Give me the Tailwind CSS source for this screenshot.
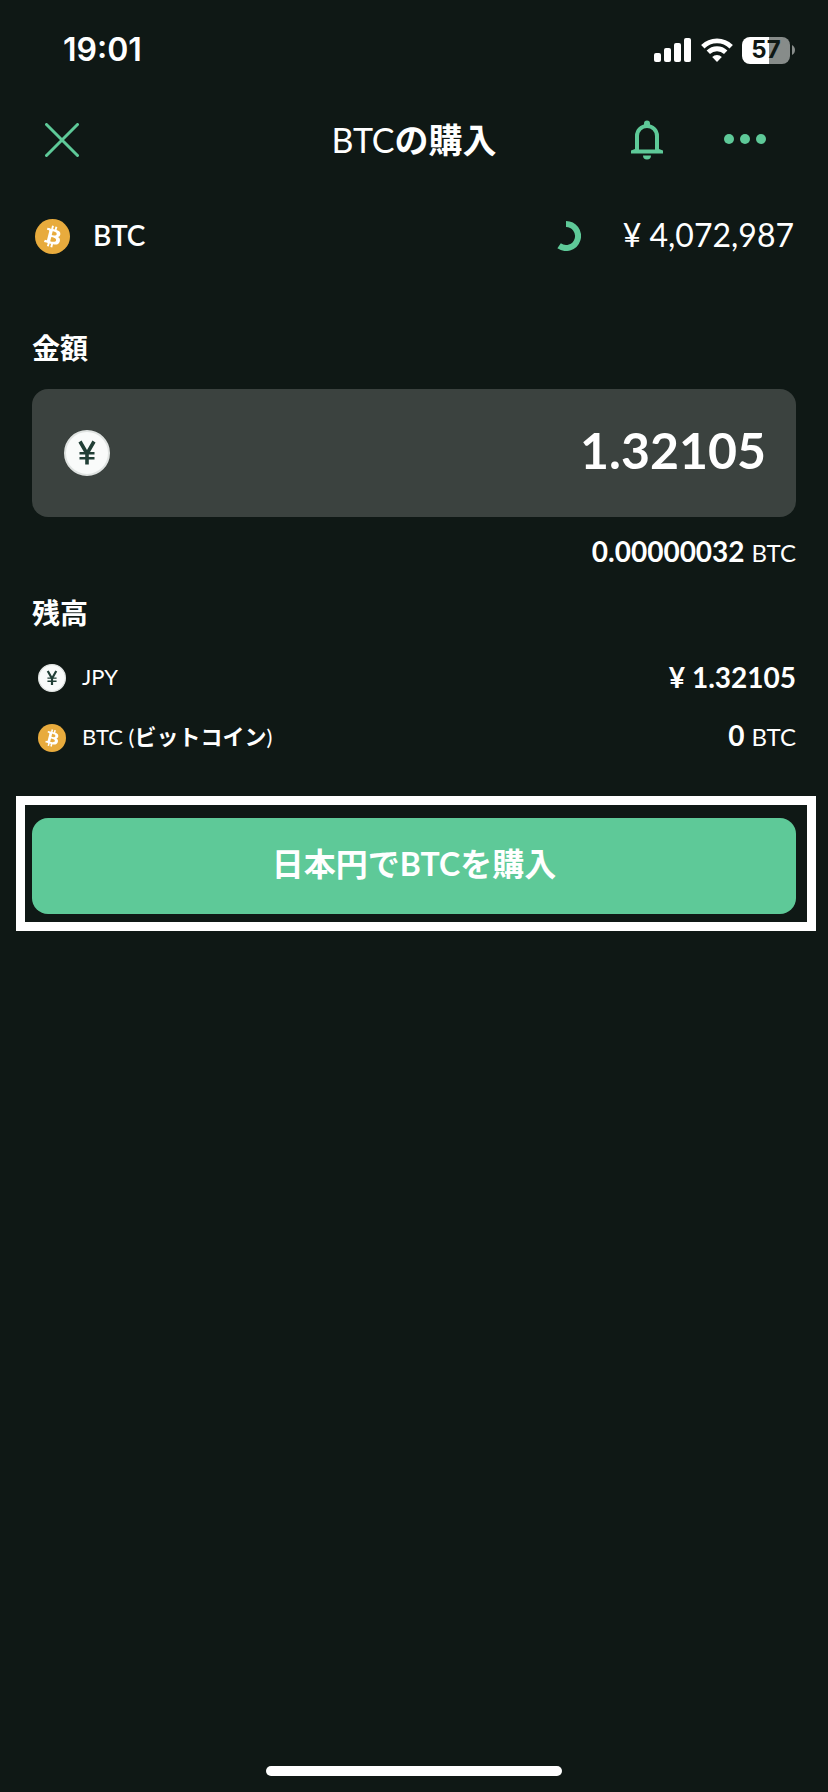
<!DOCTYPE html>
<html lang="ja">
<head>
<meta charset="utf-8">
<meta name="viewport" content="width=device-width, initial-scale=1">
<title>BTCの購入</title>
<script src="https://cdn.jsdelivr.net/npm/@tailwindcss/browser@4"></script>
</head>
<body class="flex min-h-screen flex-col bg-[#0f1815] font-['Lato','Noto_Sans_CJK_JP',sans-serif] text-white">

<svg class="hidden" aria-hidden="true">
  <symbol id="btc" viewBox="0 0 32 32">
    <circle cx="16" cy="16" r="16" fill="#e8ab3d"/>
    <path fill="#fff" d="M23.189 14.02c.314-2.096-1.283-3.223-3.465-3.975l.708-2.84-1.728-.43-.69 2.765c-.454-.114-.92-.22-1.385-.326l.695-2.783L15.596 6l-.708 2.839c-.376-.086-.746-.17-1.104-.26l.002-.009-2.384-.595-.46 1.846s1.283.294 1.256.312c.7.175.826.638.805 1.006l-.806 3.235c.048.012.11.03.18.057l-.183-.045-1.13 4.532c-.086.212-.303.531-.793.41.018.025-1.256-.313-1.256-.313l-.858 1.978 2.25.561c.418.105.828.215 1.231.318l-.715 2.872 1.727.43.708-2.84c.472.127.93.245 1.378.357l-.706 2.828 1.728.43.715-2.866c2.948.558 5.164.333 6.097-2.333.752-2.146-.037-3.385-1.588-4.192 1.13-.26 1.98-1.003 2.207-2.538zm-3.95 5.538c-.533 2.147-4.148.986-5.32.695l.95-3.805c1.172.293 4.929.872 4.37 3.11zm.535-5.569c-.487 1.953-3.495.96-4.47.717l.86-3.45c.975.243 4.118.696 3.61 2.733z"/>
  </symbol>
  <symbol id="yen" viewBox="0 0 46 46">
    <circle cx="23" cy="23" r="22" fill="#f9fbfa" stroke="#dfe3e1" stroke-width="2"/>
    <path fill="none" stroke="#213f36" stroke-width="3.6" d="M16 11.5l7 12.2 7-12.2M23 23v11.5"/>
    <path fill="none" stroke="#213f36" stroke-width="2.4" d="M15.500 23.200h15M15.500 28.200h15"/>
  </symbol>
</svg>

<div class="flex h-[100px] items-center justify-between pr-[33px] pl-[63px]">
  <time class="font-['Inter',sans-serif] text-[32px] leading-none font-semibold">19:01</time>
  <div class="flex items-center gap-[9px]">
    <svg class="h-6 w-[38px]" viewBox="0 0 38 24" fill="#fff" aria-label="電波強度">
      <rect x="0" y="15" width="7" height="9" rx="2"/><rect x="10" y="10" width="7" height="14" rx="2"/><rect x="20" y="5" width="7" height="19" rx="2"/><rect x="30" y="0" width="7" height="24" rx="2"/>
    </svg>
    <svg class="h-6 w-8" viewBox="0 0 32 24" aria-label="Wi-Fi">
      <path fill="none" stroke="#fff" stroke-width="4.800" d="M1.800 8.700a20.200 20.200 0 0 1 28.400 0M7.300 14.300a12.400 12.400 0 0 1 17.400 0"/>
      <path fill="#fff" d="M16 24l-4.800-5a6.800 6.800 0 0 1 9.600 0z"/>
    </svg>
    <div class="flex items-center gap-[2px]">
      <div class="flex h-[27px] w-12 items-center justify-center rounded-lg bg-linear-to-r from-white from-[56%] to-[#878c8a] to-[56%] font-['Inter',sans-serif] text-2xl leading-none font-bold text-[#0f1815]">57</div>
      <svg class="h-[10px] w-[3px]" viewBox="0 0 3 10" aria-hidden="true"><path fill="#878c8a" d="M0 0c4 2 4 8 0 10z"/></svg>
    </div>
  </div>
</div>

<header class="grid h-20 grid-cols-[1fr_auto_1fr] items-center px-[45px]">
  <button type="button" aria-label="閉じる" class="justify-self-start">
    <svg class="size-[34px]" viewBox="0 0 34 34" fill="none" stroke="#5ec998" stroke-width="3" stroke-linecap="round"><path d="M1.500 1.500l31 31M32.500 1.500l-31 31"/></svg>
  </button>
  <h1 class="text-[34px] leading-none whitespace-nowrap">BTC<span class="font-bold">の購入</span></h1>
  <div class="flex items-center gap-[61px] justify-self-end pr-4">
    <button type="button" aria-label="通知">
      <svg class="h-10 w-8" viewBox="0 0 32 40">
        <path fill="#5ec998" d="M13 5V3.500a3 3 0 0 1 6 0V5z"/>
        <path fill="none" stroke="#5ec998" stroke-width="4" d="M6 31V16a10 10 0 0 1 20 0v15"/>
        <path fill="#5ec998" d="M4 26v3L0 30.500V33.500h32V30.500L28 29v-3h-4v3.500H8V26zM12 35.500h8a4 4 0 0 1-8 0z"/>
      </svg>
    </button>
    <button type="button" aria-label="メニュー">
      <svg class="h-3 w-[43px]" viewBox="0 0 43 12" fill="#5ec998"><circle cx="5" cy="5" r="5"/><circle cx="21" cy="5" r="5"/><circle cx="37" cy="5" r="5"/></svg>
    </button>
  </div>
</header>

<main class="flex flex-col">
  <section class="flex h-28 items-center justify-between pr-[34px] pl-[35px]">
    <div class="flex items-center gap-[23px]">
      <svg class="size-[35px]" aria-hidden="true"><use href="#btc"/></svg>
      <span class="pb-[2px] text-[28px] leading-none font-semibold">BTC</span>
    </div>
    <div class="flex items-center gap-[42px]">
      <svg class="size-[30px]" viewBox="0 0 30 30" role="img" aria-label="更新中"><path fill="none" stroke="#5ec998" stroke-width="6" d="M15 3a12 12 0 1 1-6.900 21.800"/></svg>
      <span class="pb-[2px] text-[32px] leading-none">¥ 4,072,987</span>
    </div>
  </section>

  <section class="px-8 pt-9">
    <label for="amount" class="block text-[28px] leading-10 font-bold">金額</label>
    <div class="mt-[21px] flex h-32 items-center rounded-2xl bg-[#3b423f] pr-[30px] pl-8">
      <svg class="size-[46px] shrink-0" aria-hidden="true"><use href="#yen"/></svg>
      <input id="amount" type="text" inputmode="decimal" value="1.32105" class="min-w-0 flex-1 bg-transparent pb-[6px] text-right text-[50px] leading-none font-bold outline-none">
    </div>
    <p class="mt-[14px] text-right text-[28px] leading-10 font-bold">0.00000032 <span class="text-2xl font-normal">BTC</span></p>
  </section>

  <section class="px-8 pt-[22px]">
    <h2 class="text-[28px] leading-10 font-bold">残高</h2>
    <ul class="mt-[15px]">
      <li class="flex h-[60px] items-center justify-between pl-[6px]">
        <span class="flex items-center gap-4 text-[22px] leading-none"><svg class="size-7" aria-hidden="true"><use href="#yen"/></svg><span class="pb-[2px]">JPY</span></span>
        <span class="pb-[2px] text-[28px] leading-none font-bold">¥ 1.32105</span>
      </li>
      <li class="flex h-[60px] items-center justify-between pl-[6px]">
        <span class="flex items-center gap-4 text-[22px] leading-none"><svg class="size-7" aria-hidden="true"><use href="#btc"/></svg><span class="pb-[2px]">BTC (<span class="font-bold">ビットコイン</span>)</span></span>
        <span class="pb-[2px] text-[28px] leading-none font-bold">0 <span class="text-2xl font-normal">BTC</span></span>
      </li>
    </ul>
  </section>

  <div class="mt-7 mr-3 ml-4 border-[9px] border-white pt-[13px] pr-[11px] pb-2 pl-[7px]">
    <button type="button" class="h-24 w-full rounded-2xl bg-[#5ec998] pb-1 text-[32px] leading-none font-bold">日本円でBTCを購入</button>
  </div>
</main>

<div class="mx-auto mt-auto mb-4 h-[10px] w-[296px] rounded-full bg-white"></div>
</body>
</html>
